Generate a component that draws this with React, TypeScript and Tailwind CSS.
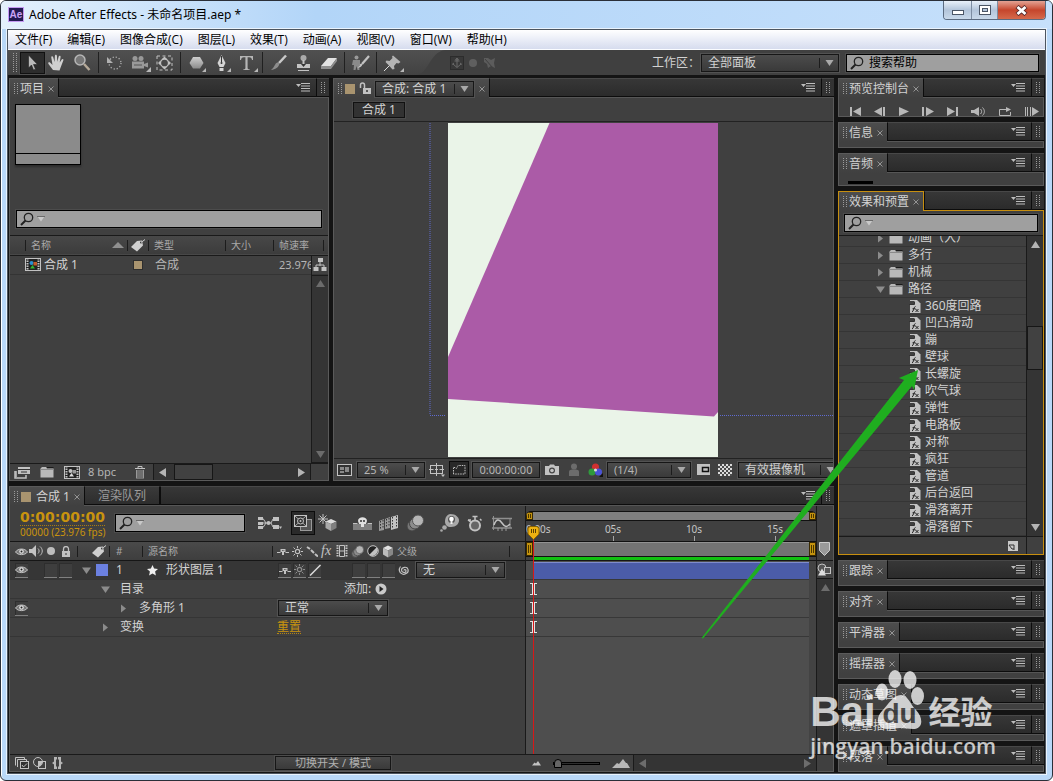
import React from "react";
import type { ReactNode } from "react";

type IconProps = { w: number; h: number; children: ReactNode; className?: string };
const Svg = ({ w, h, children, className = "" }: IconProps) => (
  <svg width={w} height={h} viewBox={`0 0 ${w} ${h}`} className={`shrink-0 ${className}`} aria-hidden="true">
    {children}
  </svg>
);

const G = "#c2c2c2";

/* ---------- small shared marks ---------- */

const Grip = ({ h = 12 }: { h?: number }) => (
  <Svg w={4} h={h}>
    {[0, 3].map((x) =>
      Array.from({ length: Math.floor(h / 2) }, (_, i) => (
        <rect key={`${x}-${i}`} x={x} y={i * 2} width="1" height="1" fill="#9a9a9a" />
      )),
    )}
  </Svg>
);

const Close = () => (
  <button aria-label="关闭" className="flex shrink-0">
    <Svg w={6} h={6}>
      <path d="M.5.5l5 5M5.500.5l-5 5" stroke="#949494" fill="none" />
    </Svg>
  </button>
);

const PanelMenu = () => (
  <button aria-label="面板菜单" className="flex shrink-0">
    <Svg w={14} h={9}>
      <path d="M0 1h5L2.500 4z" fill="#bdbdbd" />
      <path d="M5 .5h9M5 3h9M5 5.500h9M5 8h9" stroke="#bdbdbd" />
    </Svg>
  </button>
);

const Tri = ({ dir, dim = false }: { dir: "up" | "down" | "left" | "right"; dim?: boolean }) => {
  const d = {
    up: "M0 8h9L4.500 1z",
    down: "M0 1h9L4.500 8z",
    left: "M8 0v9L1 4.500z",
    right: "M1 0v9l7-4.500z",
  }[dir];
  return (
    <Svg w={9} h={9}>
      <path d={d} fill={dim ? "#6c6c6c" : "#b4b4b4"} />
    </Svg>
  );
};

const Twirl = ({ open = false }: { open?: boolean }) => (
  <button aria-label="展开" className="flex w-[9px] shrink-0 justify-center">
    <Svg w={9} h={9}>
      <path d={open ? "M0 1.500h9L4.500 8z" : "M2 .5v8l5-4z"} fill="#8c8c8c" />
    </Svg>
  </button>
);

const Sep = ({ className = "h-[11px]" }: { className?: string }) => (
  <span className={`w-px shrink-0 bg-[#1c1c1c] ${className}`} />
);

const Select = ({ label, value, className }: { label: string; value: string; className: string }) => (
  <span
    className={`relative flex shrink-0 border border-[#161616] bg-gradient-to-b from-[#4c4c4c] to-[#3a3a3a] outline outline-[#525252] ${className}`}
  >
    <select aria-label={label} className="w-full appearance-none bg-transparent pl-[6px] leading-[14px] outline-none">
      <option>{value}</option>
    </select>
    <span className="pointer-events-none absolute inset-y-0 right-[4px] flex items-center gap-[5px]">
      <Sep className="h-[10px]" />
      <Svg w={9} h={6}>
        <path d="M.5 0h8L4.500 6z" fill="#a9a9a9" />
      </Svg>
    </span>
  </span>
);

const Lens = () => (
  <Svg w={14} h={14}>
    <circle cx="8.500" cy="5.500" r="4.200" fill="none" stroke="#222" strokeWidth="1.300" />
    <path d="M5.500 8.500L1 13" stroke="#222" strokeWidth="2" />
  </Svg>
);

const Search = ({ label, className, drop = true, placeholder }: { label: string; className: string; drop?: boolean; placeholder?: string }) => (
  <label
    className={`flex h-[18px] items-center gap-[3px] border border-black bg-[#9f9f9f] pl-[3px] outline outline-[#4c4c4c] ${className}`}
  >
    <Lens />
    {drop && (
      <Svg w={8} h={6}>
        <path d="M.5 .5h7L4 5.500z" fill="#c9c9c9" />
        <path d="M0 .5h8" stroke="#6b6b6b" />
      </Svg>
    )}
    <input
      aria-label={label}
      placeholder={placeholder}
      className="w-0 min-w-0 flex-1 bg-transparent pl-[2px] leading-[14px] text-black outline-none placeholder:text-black"
    />
  </label>
);

/* ---------- panel shell ---------- */

type PanelProps = {
  tab: ReactNode;
  extra?: ReactNode;
  active?: boolean;
  className?: string;
  children?: ReactNode;
};
const Panel = ({ tab, extra, active = false, className = "", children }: PanelProps) => (
  <section className={`flex min-w-0 flex-col ${className}`}>
    <header className="flex h-[20px] shrink-0">
      <div
        className={`flex shrink-0 items-center border-t border-l bg-gradient-to-b from-[#4d4d4d] to-[#404040] pr-[4px] pl-[4px] ${
          active ? "border-r border-[#c78f10]" : "border-[#5a5a5a]"
        }`}
      >
        {tab}
      </div>
      <div className={`flex min-w-0 flex-1 border-b ${active ? "border-[#c78f10]" : "border-[#565656]"}`}>
        {extra}
        <div className="flex min-w-0 flex-1 items-center justify-end border-t border-b border-l border-t-[#484848] border-b-[#0c0c0c] border-l-[#0c0c0c] bg-gradient-to-b from-[#373737] to-[#2b2b2b] pr-[6px]">
          <PanelMenu />
        </div>
        <div className="flex w-[13px] items-center justify-center border-t border-b border-l border-t-[#484848] border-b-[#0c0c0c] border-l-[#0c0c0c] bg-[#333333]">
          <Grip />
        </div>
      </div>
    </header>
    <div
      className={`flex min-h-0 flex-1 flex-col border-x border-b bg-[#404040] ${
        active ? "border-[#c78f10]" : "border-[#5a5a5a]"
      }`}
    >
      {children}
    </div>
  </section>
);

const Title = ({ children }: { children: ReactNode }) => (
  <>
    <Grip />
    <h2 className="mr-[4px] ml-[2px] whitespace-nowrap">{children}</h2>
    <Close />
  </>
);

/* ---------- toolbar ---------- */

const Corner = () => <path d="M22 17v4h-4z" fill="#b8b8b8" />;

const tools: { name: string; art: ReactNode }[][] = [
  [
    { name: "选择工具", art: <path d="M8.500 4v13l3-3 2 5 2-.8-2-4.700h4z" fill="#b9b9b9" stroke="#222" strokeWidth=".6" /> },
    {
      name: "手形工具",
      art: (
        <path
          d="M8 19l-4.500-6c-1-1.500.8-2.300 1.800-1.200L7.500 14 6.300 6.500c-.2-1.500 1.500-1.700 1.900-.3L9.600 11l.3-6.200c0-1.500 1.900-1.500 2 0l.4 6 1.400-5.300c.4-1.400 2.100-1 1.900.4l-.9 5.600 2-3c.8-1.200 2.200-.5 1.600.9L15.800 16l-1.300 3.500z"
          fill="#d0d0d0"
        />
      ),
    },
    {
      name: "缩放工具",
      art: (
        <>
          <circle cx="10" cy="9" r="5" fill="#777" stroke="#b5b5b5" strokeWidth="1.500" />
          <path d="M14 13l5.500 6" stroke="#b5a998" strokeWidth="2.500" />
        </>
      ),
    },
  ],
  [
    {
      name: "旋转工具",
      art: (
        <>
          <circle cx="13" cy="12" r="6" fill="none" stroke="#b0b0b0" strokeWidth="1.300" strokeDasharray="1.200 1.940" />
          <path d="M5 6v6h6z" fill="#b0b0b0" />
        </>
      ),
    },
    {
      name: "摄像机工具",
      art: (
        <>
          <circle cx="8" cy="7.500" r="2.500" fill="#999" />
          <circle cx="14" cy="7.500" r="2.500" fill="#999" />
          <path d="M5 10.500h12v7H5zM17 13l4-1.500v5L17 15z" fill="#999" />
          <path d="M7 14h8" stroke="#555" />
          <path d="M24 16v5h-5z" fill="#b8b8b8" />
        </>
      ),
    },
    {
      name: "轴心点工具",
      art: (
        <>
          <rect x="5" y="5" width="15" height="14" fill="none" stroke={G} strokeDasharray="3 2.500" />
          <circle cx="12.500" cy="12" r="4" fill="none" stroke={G} strokeWidth="1.300" />
          <path d="M12.500 5.500l2.500 2.500h-5zM12.500 18.500l2.500-2.500h-5zM6 12l2.500-2.500v5zM19 12l-2.500-2.500v5z" fill={G} />
        </>
      ),
    },
  ],
  [
    {
      name: "形状工具",
      art: (
        <>
          <path d="M9 6h7l3.500 6-3.500 5.500H9L5.500 12z" fill="url(#shade)" />
          <Corner />
        </>
      ),
    },
    {
      name: "钢笔工具",
      art: (
        <>
          <path d="M12.500 4l4 8-2 4h-4l-2-4zM10.500 17h4v3h-4z" fill="#d4d4d4" />
          <path d="M12.500 5v6" stroke="#333" />
          <circle cx="12.500" cy="12" r="1" fill="#333" />
          <Corner />
        </>
      ),
    },
    {
      name: "文字工具",
      art: (
        <>
          <path d="M6 5h13v4h-1c-.3-2-1-2.800-2.800-2.800H13.600V17c0 1 .5 1.300 2 1.300V19H9.400v-.7c1.500 0 2-.3 2-1.300V6.200H9.800C8 6.200 7.300 7 7 9H6z" fill="#b5b5b5" />
          <path d="M24 17v4h-4z" fill="#b8b8b8" />
        </>
      ),
    },
  ],
  [
    {
      name: "画笔工具",
      art: (
        <>
          <path d="M20 4.500L13 12" stroke="#c9c9c9" strokeWidth="2.500" />
          <path d="M13.500 12.500c-1 4-4 6-8.500 6.500 2-1.500 3-3.500 4.500-6 1-1.500 3-2 4-.5z" fill="#8d8d8d" />
        </>
      ),
    },
    {
      name: "图章工具",
      art: (
        <>
          <circle cx="12.500" cy="7" r="3" fill="#aaa" />
          <path d="M11.500 9h2v4h-2zM6 13h13v4H6z" fill="#c4c4c4" />
          <path d="M7 19.500h11" stroke="#c4c4c4" />
          <path d="M10 13h5l-2.500 3z" fill="#333" />
        </>
      ),
    },
    {
      name: "橡皮擦工具",
      art: (
        <>
          <path d="M12 7h9l-6 8H5z" fill="#e2e2e2" />
          <path d="M5 15h10v3H5zM15 15l6-8v3l-6 8z" fill="#8f8f8f" />
        </>
      ),
    },
  ],
  [
    {
      name: "动态笔刷",
      art: (
        <>
          <circle cx="8.500" cy="6.500" r="2" fill="#9a9a9a" />
          <path d="M5 9h7v5h-1l.5 5h-2l-1-4-1 4h-2l.5-5H4z" fill="#8a8a8a" />
          <path d="M21 5l-7 8" stroke={G} strokeWidth="2.200" />
          <path d="M14.500 13.500c-1 2.500-2.500 3-5 3.500 2-1.500 2-4 3.500-4.500z" fill={G} />
        </>
      ),
    },
  ],
  [
    {
      name: "木偶工具",
      art: (
        <>
          <path d="M13 4.500l7.500 6.500-2 1.500-2-.5-2.500 3 .5 3-2 .5-3.500-4-3.500-3.500 1-1.500 3 .5 3-3-.5-1.500z" fill="#b4b4b4" />
          <path d="M9.500 14.500L4 20" stroke="#ddd" />
          <path d="M24 17v4h-4z" fill="#b8b8b8" />
        </>
      ),
    },
  ],
];

const Toolbar = () => (
  <div className="flex h-[25px] shrink-0 items-center bg-[#404040] pr-[6px]">
    <div className="flex h-full items-center bg-gradient-to-b from-[#505050] to-[#424242] pl-[5px]">
      <Grip h={20} />
      <div className="ml-[3px] flex items-center">
        {tools.map((group, gi) => (
          <div key={gi} className="flex items-center">
            {gi > 0 && <span className="mx-[3px] h-[21px] w-px bg-[#202020]" />}
            {group.map((t, i) => (
              <button
                key={t.name}
                aria-label={t.name}
                className={
                  gi === 0 && i === 0
                    ? "flex h-[22px] w-[25px] items-center justify-center border border-[#111] bg-[#2c2c2c] outline outline-[#4e4e4e]"
                    : "flex h-[23px] w-[25px] items-center justify-center"
                }
              >
                <Svg w={25} h={24}>
                  {t.art}
                </Svg>
              </button>
            ))}
          </div>
        ))}
      </div>
    </div>
    <Svg w={40} h={25}>
      <defs>
        <linearGradient id="bar" x1="0" y1="0" x2="0" y2="1">
          <stop offset="0" stopColor="#505050" />
          <stop offset="1" stopColor="#424242" />
        </linearGradient>
        <linearGradient id="shade" x1="0" y1="0" x2="0" y2="1">
          <stop offset="0" stopColor="#cfcfcf" />
          <stop offset="1" stopColor="#8b8b8b" />
        </linearGradient>
      </defs>
      <path d="M0 0h40c-16 2-16 25-30 25H0z" fill="url(#bar)" />
    </Svg>
    <Svg w={52} h={16} className="ml-[4px]">
      <rect x="1.500" y="1.500" width="13" height="13" fill="#383838" stroke="#2c2c2c" />
      <path d="M8 4v8M4 9l4 3.500L12 9M5.500 6h5M8 3l1.500 2h-3zM3 9.500l2-1.500M13 9.500L11 8" stroke="#6a6a6a" fill="none" />
      <circle cx="24" cy="8" r="4" fill="#5f5f5f" />
      <path d="M35 3h4l3 2 4-2-1 5 1 5-4-2-3 2-1-4-3-2z" fill="#5c5c5c" />
      <path d="M36 4l8 9" stroke="#404040" />
    </Svg>
    <div className="flex flex-1 items-center justify-end">
      <span className="mr-px leading-[14px]">工作区：</span>
      <Select label="工作区" value="全部面板" className="h-[18px] w-[138px]" />
      <Search label="搜索帮助" placeholder="搜索帮助" drop={false} className="ml-[7px] w-[193px]" />
    </div>
  </div>
);

/* ---------- project panel ---------- */

const FilmIcon = ({ color = false }: { color?: boolean }) => (
  <Svg w={16} h={13}>
    <rect x=".5" y=".5" width="15" height="12" fill="#222" stroke={G} />
    <path d="M2.500 0v13M13.500 0v13" stroke={G} strokeWidth="2" strokeDasharray="1.500 1" />
    <circle cx="6.500" cy="5" r="2" fill={color ? "#2b8fd0" : G} />
    <rect x="8.500" y="4" width="3.500" height="3.500" fill={color ? "#c25a2a" : "#999"} />
    <path d="M5 10.500l2.500-3.500 2.500 3.500z" fill={color ? "#33b533" : "#ddd"} />
  </Svg>
);

const Folder = () => (
  <Svg w={14} h={12}>
    <path d="M.5 2.500L2 1h4l1 1.500h6.500v9H.5z" fill="#b9b9b9" />
    <path d="M.5 3.500h13" stroke="#8a8a8a" />
    <path d="M7 1.500h6.500" stroke="#1a1a1a" />
  </Svg>
);

const Tag = () => (
  <Svg w={16} h={13}>
    <path d="M1 8l6-6 5-.5 1 5-6 6z" fill="#cfcfcf" />
    <circle cx="11" cy="3.500" r="1" fill="#333" />
    <path d="M11 3.500L15 .5" stroke="#cfcfcf" />
  </Svg>
);

const Flow = () => (
  <Svg w={14} h={13}>
    <path d="M7 4v4M3 9V7h8v2" stroke={G} fill="none" />
    <path d="M5 0h5v4H5zM.5 9h5v4h-5zM8.500 9h5v4h-5z" fill={G} />
  </Svg>
);

const ProjectPanel = () => (
  <Panel tab={<Title>项目</Title>} className="w-[320px] shrink-0">
    <div className="pt-[6px] pr-[6px] pl-[5px]">
      <div className="flex h-[61px] w-[66px] flex-col border border-black bg-[#8b8b8b] shadow-[0_2px_2px_#2c2c2c]">
        <div className="flex-1" />
        <div className="h-[11px] border-t border-black" />
      </div>
      <Search label="搜索项目" className="mt-[45px] ml-[1px]" />
    </div>
    <div className="mt-[7px] flex min-h-0 flex-1 flex-col border-t border-[#1a1a1a]">
      <table className="w-full table-fixed border-collapse text-left">
        <colgroup>
          <col className="w-[15px]" />
          <col className="w-[102px]" />
          <col className="w-[21px]" />
          <col className="w-[77px]" />
          <col className="w-[48px]" />
          <col />
          <col className="w-[17px]" />
        </colgroup>
        <thead>
          <tr className="h-[19px] border-b border-[#1a1a1a] bg-gradient-to-b from-[#484848] to-[#3c3c3c] text-[10px] leading-[14px] text-[#a9a9a9]">
            <th aria-label="状态" />
            <th className="p-0 font-normal">
              <div className="flex items-center">
                <Sep />
                <span className="ml-[5px] flex-1">名称</span>
                <Svg w={12} h={6} className="mr-[3px]">
                  <path d="M0 6h12L6 0z" fill="#8f8f8f" />
                </Svg>
              </div>
            </th>
            <th aria-label="标签" className="p-0">
              <div className="flex items-center gap-[2px]">
                <Sep />
                <Tag />
              </div>
            </th>
            <th className="p-0 font-normal">
              <div className="flex items-center">
                <Sep />
                <span className="ml-[5px]">类型</span>
              </div>
            </th>
            <th className="p-0 font-normal">
              <div className="flex items-center">
                <Sep />
                <span className="ml-[5px]">大小</span>
              </div>
            </th>
            <th colSpan={2} className="p-0 font-normal">
              <div className="flex items-center">
                <Sep />
                <span className="ml-[5px] flex-1">帧速率</span>
                <Sep className="mr-[4px] h-[11px]" />
              </div>
            </th>
          </tr>
        </thead>
        <tbody>
          <tr className="h-[19px] border-b border-[#343434] leading-[14px]">
            <td />
            <td className="p-0">
              <div className="flex items-center gap-[3px]">
                <FilmIcon color />
                <span>合成 1</span>
              </div>
            </td>
            <td className="p-0">
              <div className="ml-[6px] h-[10px] w-[10px] border border-[#2e2e2e] bg-[#a9946f]" />
            </td>
            <td className="p-0 pl-[7px] text-[#b5b5b5]">合成</td>
            <td />
            <td className="overflow-hidden p-0 pl-[6px] whitespace-nowrap text-[#b5b5b5]">
              <div className="overflow-hidden text-[11px]">23.976</div>
            </td>
            <td className="border-l border-[#1a1a1a] p-0 pl-[1px]">
              <button aria-label="流程图" className="flex">
                <Flow />
              </button>
            </td>
          </tr>
        </tbody>
      </table>
      <div className="flex min-h-0 flex-1">
        <div className="flex-1" />
        <div className="flex w-[17px] flex-col items-center justify-between border-y border-l border-[#1a1a1a] bg-[#343434] py-[3px]">
          <Tri dir="up" dim />
          <Tri dir="down" dim />
        </div>
      </div>
    </div>
    <footer className="flex h-[17px] shrink-0 items-center border-t border-[#1a1a1a] pl-[4px]">
      <Svg w={17} h={13}>
        <path d="M4 1h12v7H4z" fill={G} />
        <path d="M4 3.500h12M7 6h6" stroke="#333" />
        <path d="M1 5v7h11V9M1 6h2M1 8h2M1 10h2" stroke={G} fill="none" strokeWidth="1.500" />
      </Svg>
      <span className="ml-[9px] flex">
        <Folder />
      </span>
      <span className="ml-[10px] flex">
        <FilmIcon />
      </span>
      <span className="ml-[8px] text-[11px] leading-[14px] text-[#b5b5b5]">8 bpc</span>
      <button aria-label="删除" className="ml-[18px] flex">
        <Svg w={12} h={14}>
          <path d="M1 3.500h10M4 3V1.500h4V3" stroke={G} fill="none" />
          <path d="M2 5h8v8.500H2z" fill="#999" />
          <path d="M4 5v8M6 5v8M8 5v8" stroke="#444" />
        </Svg>
      </button>
      <div className="ml-[7px] flex h-full w-[158px] items-center border-x border-[#1a1a1a] bg-[#343434] pl-[4px]">
        <Tri dir="left" />
        <div className="ml-[7px] h-[16px] w-[39px] border border-[#161616] bg-[#414141]" />
        <div className="flex-1" />
        <span className="mr-[4px] flex">
          <Tri dir="right" />
        </span>
      </div>
    </footer>
  </Panel>
);

/* ---------- composition panel ---------- */

const CompPanel = () => (
  <Panel
    className="flex-1"
    tab={
      <>
        <Grip />
        <span className="ml-[3px] h-[10px] w-[10px] bg-[#a9946f]" />
        <Svg w={13} h={13} className="ml-[4px]">
          <path d="M1.500 6V3a2 2 0 014 0v3" stroke={G} fill="none" strokeWidth="1.500" />
          <path d="M4 6h8v6H4z" fill={G} />
          <path d="M8 8v2" stroke="#333" strokeWidth="1.500" />
        </Svg>
        <Select label="合成" value="合成: 合成 1" className="mr-[5px] ml-[3px] h-[16px] w-[99px]" />
        <Close />
      </>
    }
  >
    <div className="flex h-[24px] items-center border-b border-[#222] pl-[19px]">
      <button className="h-[16px] border border-[#111] bg-[#323232] px-[8px] leading-[14px] outline outline-[#4b4b4b]">
        合成 1
      </button>
    </div>
    <div className="flex min-h-0 flex-1 overflow-hidden">
      <svg viewBox="334 123 499 334" className="h-full w-full" role="img" aria-label="合成视图">
        <path d="M448 123h270v334H448z" fill="#eaf4e8" />
        <path d="M549.500 123H718v289l-4 4.500L448 399v-42z" fill="#ab5ba7" />
        <path d="M430 123v292" stroke="#5f6bd0" strokeDasharray="1 1" fill="none" />
        <path d="M430 415.500H446M720 415.500h113" stroke="#5f6bd0" strokeDasharray="1 1" fill="none" />
      </svg>
    </div>
    <footer className="flex h-[22px] shrink-0 items-center overflow-hidden border-t border-[#222] pl-[3px] text-[#b5b5b5]">
      <Svg w={15} h={12}>
        <rect x=".5" y=".5" width="14" height="11" fill="#333" stroke={G} />
        <path d="M3 3h4v3H3zM8 3h4v5H8zM3 7h4v2H3z" fill="#8a8a8a" />
      </Svg>
      <Select label="缩放" value="25 %" className="ml-[5px] h-[16px] w-[68px] text-[11px]" />
      <Svg w={16} h={14} className="ml-[4px]">
        <rect x="1.500" y="2.500" width="12" height="8" fill="none" stroke={G} />
        <path d="M7.500 0v5M7.500 8v5M0 6.500h4.500M10.500 6.500H15M6 6.500h3M7.500 5v3" stroke={G} />
        <path d="M12 11.500h4L14 14z" fill={G} />
      </Svg>
      <button
        aria-label="遮罩显示"
        className="ml-[4px] flex h-[17px] w-[20px] shrink-0 items-center justify-center border border-[#0c0c0c] bg-[#282828]"
      >
        <Svg w={14} h={11}>
          <path d="M1.500 10V3l3 1.500L6 1.500h7V10z" fill="none" stroke={G} strokeDasharray="1.500 1" />
        </Svg>
      </button>
      <button className="ml-[3px] h-[16px] w-[68px] shrink-0 border border-[#161616] bg-gradient-to-b from-[#4a4a4a] to-[#3a3a3a] text-center text-[11px] leading-[14px] outline outline-[#525252]">
        0:00:00:00
      </button>
      <Svg w={14} h={11} className="ml-[5px]">
        <path d="M0 2h4l1-1.500h4L10 2h4v9H0z" fill={G} />
        <circle cx="7" cy="6.500" r="3" fill="#444" />
        <circle cx="7" cy="6.500" r="1.800" fill={G} />
      </Svg>
      <Svg w={12} h={13} className="ml-[9px]">
        <circle cx="6" cy="3.500" r="3" fill="#6c6c6c" />
        <path d="M1 13V8.500C1 7 3 6.500 6 6.500s5 .5 5 2V13z" fill="#6c6c6c" />
      </Svg>
      <Svg w={16} h={14} className="ml-[8px]">
        <circle cx="7.500" cy="4" r="3.500" fill="#d03030" />
        <circle cx="4" cy="9" r="3.500" fill="#2f9a3c" />
        <circle cx="10.500" cy="9" r="3.500" fill="#4a52d8" />
        <circle cx="7.500" cy="7" r="1.500" fill="#ddd" />
        <path d="M15 10v4h-4z" fill="#111" />
      </Svg>
      <Select label="分辨率" value="(1/4)" className="ml-[3px] h-[16px] w-[84px] text-[11px]" />
      <Svg w={13} h={11} className="ml-[6px]">
        <rect width="13" height="11" fill={G} />
        <rect x="5.500" y="3.500" width="6" height="4" fill={G} stroke="#111" strokeWidth="1.500" />
      </Svg>
      <Svg w={14} h={12} className="ml-[8px]">
        <rect width="14" height="12" fill="#dadada" />
        {Array.from({ length: 6 }, (_, r) =>
          Array.from({ length: 7 }, (_, c) =>
            (r + c) % 2 ? <rect key={`${r}-${c}`} x={c * 2} y={r * 2} width="2" height="2" fill="#4a4a4a" /> : null,
          ),
        )}
      </Svg>
      <Select label="视图" value="有效摄像机" className="ml-[6px] h-[16px] w-[102px] text-[#d0d0d0]" />
    </footer>
  </Panel>
);

/* ---------- timeline panel ---------- */

const Eye = () => (
  <Svg w={13} h={9}>
    <path d="M.5 5C3 1 10 1 12.500 5 10 8.500 3 8.500.5 5z" fill="#777" stroke={G} />
    <circle cx="6.500" cy="4.500" r="2.300" fill="#ddd" />
    <circle cx="6.500" cy="4.500" r="1" fill="#222" />
  </Svg>
);
const Shy = () => (
  <Svg w={12} h={10}>
    <path d="M0 6.500h3.500M8.500 6.500H12" stroke={G} />
    <path d="M3.500 3h5v3h-1.500v3h-2V6H3.500z" fill={G} />
    <path d="M5 4.500h.6M6.600 4.500h.6" stroke="#222" />
  </Svg>
);
const Sun = ({ dim = false }: { dim?: boolean }) => (
  <Svg w={11} h={11}>
    <circle cx="5.500" cy="5.500" r="2.200" fill="none" stroke={dim ? "#8d8d8d" : G} strokeWidth="1.200" />
    <path
      d="M5.500 0v2M5.500 9v2M0 5.500h2M9 5.500h2M1.500 1.500l1.500 1.500M8 8l1.500 1.500M9.500 1.500L8 3M3 8L1.500 9.500"
      stroke={dim ? "#8d8d8d" : G}
    />
  </Svg>
);
const Cell = ({ label, children }: { label: string; children?: ReactNode }) => (
  <button
    aria-label={label}
    className="flex h-[15px] w-[13px] shrink-0 items-center justify-center border-b border-[#808080] bg-[#3e3e3e] shadow-[inset_1px_1px_#2e2e2e]"
  >
    {children}
  </button>
);
const Blur = ({ big = false }: { big?: boolean }) => (
  <svg width={big ? 18 : 13} height={big ? 18 : 13} viewBox="0 0 18 18" className="shrink-0" aria-hidden="true">
    <circle cx="6" cy="12" r="5" fill="#777" stroke="#444" />
    <circle cx="9" cy="9.500" r="5.500" fill="#8c8c8c" stroke="#444" />
    <circle cx="12" cy="6.500" r="5.500" fill="#b5b5b5" stroke="#555" />
  </svg>
);
const Cube = () => (
  <Svg w={12} h={13}>
    <path d="M6 .5l5 2.500-5 2.500L1 3z" fill="#e0e0e0" />
    <path d="M1 3l5 2.500v7L1 9.500z" fill="#bbb" />
    <path d="M11 3L6 5.500v7l5-3z" fill="#888" />
  </Svg>
);

const layerGrid = "grid grid-cols-[67px_32px_33px_130px_1fr] items-center";

const TimelineControls = () => (
  <div className="flex h-[36px] shrink-0 items-start border-b border-[#161616] pl-[10px]">
    <div className="w-[84px] pt-[4px] text-[#c8930e]">
      <button className="block border-b border-dotted border-[#a87c12] font-[family-name:'DejaVu_Sans'] text-[14px] leading-[15px] font-bold">
        0:00:00:00
      </button>
      <div className="text-[10px] leading-[13px] whitespace-nowrap">00000 (23.976 fps)</div>
    </div>
    <Search label="搜索图层" className="mt-[8px] ml-[11px] w-[130px]" />
    <div className="mt-[5px] flex h-[24px] items-center">
      <Svg w={25} h={14} className="ml-[12px]">
        <path d="M1 1h5v3H1zM1 6h5v3H1zM1 10h5v3H1zM16 1h6v4h-6zM16 9h6v4h-6z" fill={G} />
        <path d="M6 2.500l3 4.500-3 4.500M6 7h8M16 3l-2 4 2 4" stroke={G} fill="none" />
        <circle cx="11.500" cy="7" r="2" fill={G} />
        <path d="M22 10.500h3L23.500 13z" fill={G} />
      </Svg>
      <button aria-label="实时更新" className="ml-[9px] flex h-[24px] w-[24px] items-center justify-center border border-[#0c0c0c] bg-[#2a2a2a]">
        <Svg w={18} h={18}>
          <rect x="6.500" y="5.500" width="11" height="11" fill="#555" stroke="#999" />
          <rect x=".5" y="1.500" width="12" height="11" fill="#333" stroke={G} />
          <path d="M1 2l11 10M12 2L1 12" stroke={G} strokeWidth=".8" />
          <circle cx="6.500" cy="7" r="3" fill="#333" stroke={G} />
          <circle cx="6.500" cy="7" r="1" fill={G} />
        </Svg>
      </button>
      <Svg w={20} h={18} className="ml-[3px]">
        <path d="M5 0v10M0 5h10M1.500 1.500l7 7M8.500 1.500l-7 7" stroke={G} />
        <path d="M13 5l5.500 2.500L13 10 7.500 7.500z" fill="#ddd" />
        <path d="M7.500 7.500L13 10v7l-5.500-3z" fill="#aaa" />
        <path d="M18.500 7.500L13 10v7l5.500-3z" fill="#808080" />
      </Svg>
      <Svg w={19} h={14} className="ml-[15px]">
        <path d="M0 8h19v6H0z" fill="#7f7f7f" />
        <path d="M0 7.500h4.500M14.500 7.500H19" stroke={G} />
        <path d="M5 5c0-5 9-5 9 0l-1 3h-2v3H8V8H6z" fill="#e0e0e0" />
        <circle cx="8" cy="5" r="1" fill="#333" />
        <circle cx="11" cy="5" r="1" fill="#333" />
      </Svg>
      <Svg w={19} h={17} className="ml-[7px]">
        <path d="M0 6l5-2v11l-5 1zM6 4l5-2v11l-5 1z" fill="#999" />
        <path d="M12 2l7-2v13l-7 2z" fill={G} />
        <path d="M1.500 6v9M4 5v9M7.500 4v9M10 3v9M13.500 2v12M17.500 1v12" stroke="#333" strokeDasharray="1.500 1.500" />
      </Svg>
      <span className="ml-[8px] flex">
        <Blur big />
      </span>
      <Svg w={19} h={18} className="ml-[16px]">
        <path d="M10.500 0C16 0 19 3.500 19 6.500S16 13 11 13c-4 0-6-2-6-5.500S7 0 10.500 0z" fill="#a9a9a9" />
        <circle cx="11.500" cy="5.500" r="3.500" fill="#555" />
        <circle cx="11.500" cy="5" r="2.300" fill="#fff" />
        <path d="M10.500 7h2v3h-2z" fill="#eee" />
        <circle cx="4.500" cy="13.500" r="2.300" fill="#a9a9a9" />
        <circle cx="1.500" cy="16.500" r="1.300" fill="#a9a9a9" />
      </Svg>
      <Svg w={15} h={17} className="ml-[8px]">
        <circle cx="8" cy="10.500" r="5" fill="#666" stroke={G} strokeWidth="2" />
        <path d="M8 1v4M5.500 1.500h5M1 5l4 3M1 5h3M13 4l1.500 1.500" stroke={G} strokeWidth="1.500" />
      </Svg>
      <Svg w={20} h={15} className="ml-[10px]">
        <path d="M0 2.500h20M0 12h20" stroke="#8f8f8f" strokeWidth="1.500" />
        <path d="M1.500 0v14M18 2v10" stroke="#8f8f8f" />
        <path d="M2 9c2-6 5-6.500 8-2s5 4.500 8 1" stroke={G} fill="none" strokeWidth="1.500" />
        <path d="M6 12v3M10 12v3M14 12v3" stroke="#999" />
      </Svg>
    </div>
  </div>
);

const LayerHeader = () => (
  <div className={`${layerGrid} h-[19px] shrink-0 border-b border-[#161616] bg-gradient-to-b from-[#4a4a4a] to-[#3e3e3e] text-[10px] leading-[14px] text-[#a9a9a9]`}>
    <div className="flex items-center pl-[5px]">
      <Eye />
      <Svg w={14} h={12} className="ml-px">
        <path d="M0 4h3l4-4v12L3 8H0z" fill={G} />
        <path d="M9 3.500c1.500 1.500 1.500 3.500 0 5M11 1.500c3 2.500 3 6.500 0 9" stroke={G} fill="none" />
      </Svg>
      <span className="ml-[4px] h-[8px] w-[8px] rounded-full bg-[#bdbdbd]" />
      <Svg w={8} h={11} className="ml-[7px]">
        <path d="M1.500 5V3a2.500 2.500 0 015 0v2" stroke={G} fill="none" strokeWidth="1.300" />
        <path d="M0 5h8v6H0z" fill={G} />
        <path d="M4 7v2" stroke="#333" />
      </Svg>
    </div>
    <div className="flex items-center">
      <Sep />
      <span className="ml-[13px] flex">
        <Tag />
      </span>
    </div>
    <div className="flex items-center">
      <Sep />
      <span className="ml-[6px]">#</span>
    </div>
    <div className="flex items-center">
      <Sep />
      <span className="ml-[5px]">源名称</span>
    </div>
    <div className="flex items-center">
      <Sep />
      <span className="ml-[4px] flex items-center gap-[3px]">
        <Shy />
        <Sun />
        <Svg w={12} h={11}>
          <path d="M1 1l3 2M5 4l3 3M9 8l3 2.500" stroke={G} fill="none" strokeWidth="2" />
        </Svg>
        <i className="w-[12px] font-[family-name:'Liberation_Serif'] text-[14px] text-[#c2c2c2]">fx</i>
        <Svg w={12} h={12}>
          <path d="M1.500 0v12M10.500 0v12" stroke={G} strokeWidth="2" strokeDasharray="1.500 1" />
          <path d="M3.500 .5h5v11h-5zM3.500 6h5" stroke={G} fill="none" />
        </Svg>
        <Blur />
        <Svg w={12} h={12}>
          <circle cx="6" cy="6" r="5.300" fill="#222" stroke={G} />
          <path d="M9.700 2.300A5.300 5.300 0 012.300 9.700z" fill={G} />
        </Svg>
        <Cube />
      </span>
      <span className="ml-[3px] flex-1">父级</span>
      <Sep className="mr-[15px] h-[11px]" />
    </div>
  </div>
);

const rowLine = "h-[19px] shrink-0 border-b border-[#353535] leading-[14px]";

const Layers = () => (
  <div className="flex flex-1 flex-col">
    <div className={`${layerGrid} ${rowLine} bg-[#363636]`}>
      <div className="flex items-center gap-[2px] pl-[5px]">
        <Cell label="显示">
          <Eye />
        </Cell>
        <span className="w-[12px]" />
        <Cell label="独奏" />
        <Cell label="锁定" />
      </div>
      <div className="flex items-center gap-[5px] pl-[5px]">
        <Twirl open />
        <span className="h-[12px] w-[12px] bg-[#6b80e0]" />
      </div>
      <span className="pl-[7px]">1</span>
      <div className="flex items-center gap-[8px] pl-[5px]">
        <Svg w={11} h={11}>
          <path d="M5.500 0l1.600 3.600 3.900.4-2.900 2.600.8 3.900-3.400-2-3.400 2 .8-3.900L0 4l3.900-.4z" fill="#eee" />
        </Svg>
        <span>形状图层 1</span>
      </div>
      <div className="flex items-center pl-[6px]">
        <div className="flex gap-[2px]">
          <Cell label="退缩">
            <Shy />
          </Cell>
          <Cell label="卷展变换">
            <Sun dim />
          </Cell>
          <Cell label="品质">
            <Svg w={12} h={12}>
              <path d="M1 11.500L11.500 1" stroke="#ddd" strokeWidth="1.500" />
            </Svg>
          </Cell>
        </div>
        <div className="ml-[31px] flex gap-[2px]">
          <Cell label="运动模糊" />
          <Cell label="调节图层" />
          <Cell label="三维图层" />
        </div>
        <Svg w={13} h={12} className="ml-[3px]">
          <path d="M6 6.500c0-1.500 2.300-1 2 .6-.5 2.200-4.500 1.700-4.500-1C3.500 3 9 2 10 5.300c1 3.500-3 5.700-5.700 4.700C1 9 .5 5 2.500 2.500" stroke={G} fill="none" strokeWidth="1.200" />
        </Svg>
        <Select label="父级" value="无" className="ml-[5px] h-[16px] w-[89px]" />
      </div>
    </div>
    <div className={`${rowLine} flex items-center pl-[91px]`}>
      <Twirl open />
      <span className="ml-[10px] w-[224px]">目录</span>
      <span>添加:</span>
      <button aria-label="添加" className="ml-[4px] flex">
        <Svg w={12} h={12}>
          <circle cx="6" cy="6" r="5.500" fill="#c9c9c9" />
          <path d="M4.500 3v6l4-3z" fill="#222" />
        </Svg>
      </button>
    </div>
    <div className={`${rowLine} flex items-center pl-[5px]`}>
      <Cell label="显示">
        <Eye />
      </Cell>
      <span className="ml-[91px] flex">
        <Twirl />
      </span>
      <span className="ml-[11px] w-[139px]">多角形 1</span>
      <Select label="模式" value="正常" className="h-[16px] w-[110px]" />
    </div>
    <div className={`${rowLine} flex items-center pl-[91px]`}>
      <Twirl />
      <span className="ml-[10px] w-[157px]">变换</span>
      <button className="border-b border-dotted border-[#b5850f] leading-[13px] text-[#c8930e]">重置</button>
    </div>
  </div>
);

const Handle = () => (
  <span className="flex w-[7px] shrink-0 items-center justify-center gap-px border border-[#3a2a00] bg-[#c4930f]">
    <i className="h-[60%] w-px bg-[#4a3600]" />
    <i className="h-[60%] w-px bg-[#4a3600]" />
  </span>
);

const trackRow = "flex h-[19px] shrink-0 items-center border-b border-[#383838]";

const TimeTracks = () => (
  <div className="relative flex w-[292px] shrink-0 flex-col border-x border-[#1a1a1a] bg-[#404040]">
    <div className="mt-[5px] flex h-[10px] overflow-hidden rounded-t-[5px] border-y border-[#111]">
      <Handle />
      <span className="flex-1 bg-[#7f7f7f]" />
      <Handle />
    </div>
    <div className="relative h-[20px] overflow-hidden text-[10px] leading-[14px] text-[#c5c5c5]">
      <span className="absolute top-px left-0">0:00s</span>
      {[
        { t: "05s", x: 87 },
        { t: "10s", x: 168 },
        { t: "15s", x: 249 },
      ].map((m) => (
        <span key={m.t} style={{ left: m.x - 15 }} className="absolute top-px flex h-[19px] w-[30px] flex-col items-center justify-between">
          {m.t}
          <i className="h-[5px] w-px bg-[#a5a5a5]" />
        </span>
      ))}
    </div>
    <div className="flex h-[16px] border-y border-[#111]">
      <Handle />
      <span className="flex-1 border-t border-[#929292] bg-[#737373]" />
      <Handle />
    </div>
    <div className="h-[4px] border-b border-[#161616] bg-[#404040] px-[7px]">
      <div className="h-[3px] bg-[#12c112]" />
    </div>
    <div className="flex flex-1 flex-col bg-[#4e4e4e] pr-[7px] shadow-[inset_-7px_0_#434343]">
      <div className={`${trackRow} pl-[7px]`}>
        <span className="h-[17px] flex-1 border-t border-[#7f8ccc] bg-[#4b5ca8]" />
      </div>
      {[0, 1, 2].map((i) => (
        <div key={i} className={`${trackRow} pl-[4px]`}>
          <Svg w={7} h={12}>
            <path d="M0 .5h7M0 11.500h7M2.500 0v12M4.500 0v12" stroke="#e2e2e2" />
          </Svg>
        </div>
      ))}
    </div>
    <span className="absolute top-[20px] bottom-0 left-[7px] w-px bg-[#d81818]" />
    <span className="absolute top-[20px] left-[1px]">
      <Svg w={13} h={14}>
        <path d="M1 2l2-1.500h7L12 2v6l-5.500 5.500L1 8z" fill="#eeb211" stroke="#8a6200" />
        <path d="M4.500 3v4M6.500 3v4M8.500 3v4" stroke="#5a4000" />
      </Svg>
    </span>
  </div>
);

const Timeline = () => (
  <Panel
    className="min-h-0 flex-1"
    tab={
      <>
        <Grip />
        <span className="ml-[3px] h-[10px] w-[10px] bg-[#a9946f]" />
        <h2 className="mr-[4px] ml-[5px] whitespace-nowrap">合成 1</h2>
        <Close />
      </>
    }
    extra={
      <button className="w-[76px] border border-[#0c0c0c] border-t-[#484848] bg-gradient-to-b from-[#3a3a3a] to-[#2d2d2d] leading-[14px] whitespace-nowrap text-[#9c9c9c]">
        渲染队列
      </button>
    }
  >
    <div className="flex min-h-0 flex-1">
      <div className="flex min-w-0 flex-1 flex-col">
        <TimelineControls />
        <LayerHeader />
        <Layers />
      </div>
      <TimeTracks />
      <div className="flex w-[16px] shrink-0 flex-col bg-[#404040]">
        <div className="flex h-[55px] items-end border-b border-[#161616] pb-[4px] pl-[2px]">
          <Svg w={11} h={14}>
            <path d="M.5.5h10v8l-5 5-5-5z" fill="#999" stroke="#ccc" />
          </Svg>
        </div>
        <div className="flex h-[18px] items-center border-b border-[#161616]">
          <Svg w={14} h={13}>
            <circle cx="5" cy="5" r="4" fill="#555" stroke={G} />
            <rect x="7.500" y="4.500" width="6" height="6" fill="#555" stroke={G} />
            <path d="M1 12.500l4-7 4 7z" fill="#ddd" />
          </Svg>
        </div>
        <div className="flex flex-1 flex-col items-center justify-between bg-[#343434] py-[4px]">
          <Tri dir="up" dim />
          <Tri dir="down" dim />
        </div>
      </div>
    </div>
    <footer className="flex h-[17px] shrink-0 items-center border-t border-[#1a1a1a] pl-[5px]">
      <Svg w={14} h={12}>
        <path d="M.5 8.500v-8h9v2M2.500 10V2.500h9v2" stroke={G} fill="none" />
        <rect x="5.500" y="4.500" width="8" height="7" fill="#333" stroke={G} />
        <path d="M7 8l1.500 2L12 6.500" stroke={G} fill="none" />
      </Svg>
      <Svg w={14} h={12} className="ml-[4px]">
        <circle cx="5" cy="5" r="4.500" fill="none" stroke={G} />
        <rect x="5.500" y="4.500" width="7" height="7" fill="none" stroke={G} />
        <path d="M5 4.500h4.500c0 2-1.500 4-4 5z" fill={G} />
      </Svg>
      <Svg w={11} h={12} className="ml-[5px]">
        <path d="M5 0H2v4.500L0 6l2 1.500V12h3V9.500H4v-7h1zM6 0h3v4.500L11 6 9 7.500V12H6V9.500h1v-7H6z" fill="#b5b5b5" />
      </Svg>
      <button className="ml-[212px] h-[14px] w-[116px] border border-[#161616] bg-gradient-to-b from-[#4a4a4a] to-[#3a3a3a] text-[11px] leading-[12px] text-[#b0b0b0] outline outline-[#4c4c4c]">
        切换开关 / 模式
      </button>
      <div className="flex flex-1 items-center justify-end">
        <Svg w={9} h={6}>
          <path d="M0 5.500l2.500-3 1.500 1L6 1l3 4.500z" fill={G} />
        </Svg>
        <input
          type="range"
          aria-label="时间缩放"
          defaultValue={0}
          className="mr-[12px] ml-[12px] h-[3px] w-[47px] appearance-none border border-black bg-[#2e2e2e] [&::-webkit-slider-thumb]:h-[9px] [&::-webkit-slider-thumb]:w-[8px] [&::-webkit-slider-thumb]:appearance-none [&::-webkit-slider-thumb]:rounded-t-[4px] [&::-webkit-slider-thumb]:border [&::-webkit-slider-thumb]:border-black [&::-webkit-slider-thumb]:bg-[#666]"
        />
        <Svg w={18} h={9}>
          <path d="M0 9l5-5 2 1 4-5 3 4 1 0 3 5z" fill="#b8b8b8" />
        </Svg>
      </div>
      <div className="ml-[3px] flex h-full w-[184px] items-center justify-between border-x border-[#1a1a1a] bg-[#343434] px-[4px]">
        <Tri dir="left" dim />
        <Tri dir="right" dim />
      </div>
      <div className="w-[16px]" />
    </footer>
  </Panel>
);

/* ---------- right column ---------- */

const transport: { name: string; w: number; d: string; line?: string }[] = [
  { name: "首帧", w: 11, d: "M0 0h2v9H0zM11 0v9L3 4.500z" },
  { name: "上一帧", w: 12, d: "M8 0v9L0 4.500zM9 0h2v9H9z" },
  { name: "播放", w: 10, d: "M0 0v9l10-4.500z" },
  { name: "下一帧", w: 12, d: "M0 0h2v9H0zM4 0v9l8-4.500z" },
  { name: "末帧", w: 11, d: "M0 0v9l8-4.500zM9 0h2v9H9z" },
  { name: "音频开关", w: 14, d: "M0 3h3l5-3v9L3 6H0z", line: "M9.500 2c1.500 1.500 1.500 3.500 0 5M11.500 .5c2.500 2.500 2.500 5.500 0 8" },
  { name: "循环", w: 14, d: "M8 0l5 2.500L8 5z", line: "M9 2.500H1.500v6h11V5" },
  { name: "内存预演", w: 14, d: "M7 0v9l7-4.500z", line: "M.5 0v9M2.500 0v9M5.500 0v9" },
];

const effects = ["360度回路", "凹凸滑动", "蹦", "壁球", "长螺旋", "吹气球", "弹性", "电路板", "对称", "疯狂", "管道", "后台返回", "滑落离开", "滑落留下"];
const folders = [
  { name: "动画（入）", open: false },
  { name: "多行", open: false },
  { name: "机械", open: false },
  { name: "路径", open: true },
];

const FxFile = () => (
  <Svg w={12} h={13}>
    <path d="M1 0h7l3.500 3.500V13H1z" fill={G} />
    <path d="M0 1h5v3H0z" fill="#404040" />
    <path d="M0 4.500h5.500V1.500" stroke="#333" fill="none" />
    <path d="M3 12c1.700 0 1.500-5.500 3.500-5.500M3.500 8.800h3M6.500 9l3 3M9.500 9l-3 3" stroke="#222" fill="none" />
  </Svg>
);

const EffectsPanel = () => (
  <Panel active tab={<Title>效果和预置</Title>} className="min-h-0 flex-1">
    <Search label="搜索效果" className="mx-[5px] mt-[3px] shrink-0" />
    <div className="mt-[3px] flex min-h-0 flex-1 border-t border-[#1a1a1a]">
      <ul className="flex min-w-0 flex-1 flex-col justify-end overflow-hidden">
        {folders.map((f) => (
          <li key={f.name} className="flex h-[17px] shrink-0 items-center border-b border-[#353535] pl-[37px]">
            <Twirl open={f.open} />
            <span className="ml-[4px] flex">
              <Folder />
            </span>
            <span className="ml-[5px] leading-[16px]">{f.name}</span>
          </li>
        ))}
        {effects.map((e) => (
          <li key={e} className="flex h-[17px] shrink-0 items-center border-b border-[#353535] pl-[70px]">
            <FxFile />
            <span className="ml-[4px] leading-[16px]">{e}</span>
          </li>
        ))}
      </ul>
      <div className="flex w-[17px] flex-col items-center border-l border-[#1a1a1a] bg-[#343434] pt-[4px] pb-[4px]">
        <Tri dir="up" />
        <div className="mt-[77px] h-[44px] w-full border border-[#161616] bg-[#414141]" />
        <div className="flex-1" />
        <Tri dir="down" />
      </div>
    </div>
    <footer className="flex h-[18px] shrink-0 border-t border-[#1a1a1a]">
      <button aria-label="新建动画预置" className="flex flex-1 items-center justify-end pr-[8px]">
        <Svg w={10} h={10}>
          <rect width="10" height="10" fill="#c9c9c9" />
          <path d="M1 4h5v5M1 4l3 4h2" stroke="#333" fill="none" />
        </Svg>
      </button>
      <div className="w-[17px] border-l border-[#1a1a1a]" />
    </footer>
  </Panel>
);

const RightColumn = () => (
  <aside className="flex w-[206px] shrink-0 flex-col gap-[5px]">
    <Panel tab={<Title>预览控制台</Title>} className="h-[39px] shrink-0">
      <div className="flex items-center justify-between pt-[9px] pr-[4px] pl-[11px]">
        {transport.map((b) => (
          <button key={b.name} aria-label={b.name} className="flex">
            <Svg w={b.w} h={9}>
              <path d={b.d} fill="#b8b8b8" />
              {b.line && <path d={b.line} stroke="#b8b8b8" fill="none" />}
            </Svg>
          </button>
        ))}
      </div>
    </Panel>
    <Panel tab={<Title>信息</Title>} className="h-[26px] shrink-0" />
    <Panel tab={<Title>音频</Title>} className="h-[33px] shrink-0">
      <div className="mt-[8px] ml-[9px] h-[3px] w-[25px] bg-black" />
    </Panel>
    <EffectsPanel />
    {["跟踪", "对齐", "平滑器", "摇摆器", "动态草图", "遮罩插值", "段落"].map((t) => (
      <Panel key={t} tab={<Title>{t}</Title>} className="h-[26px] shrink-0" />
    ))}
  </aside>
);

/* ---------- overlays ---------- */

const Watermark = () => (
  <div className="pointer-events-none absolute right-[56px] bottom-[20px] text-white opacity-75">
    <div className="flex h-[62px] items-end font-[family-name:'Liberation_Sans','Noto_Sans_CJK_SC',sans-serif] font-bold">
      <span className="text-[42px] leading-[40px]">Bai</span>
      <span className="relative flex">
        <Svg w={48} h={62}>
          <g fill="#fff">
            <ellipse cx="6" cy="22" rx="6" ry="8.500" />
            <ellipse cx="19" cy="9" rx="6.500" ry="9" />
            <ellipse cx="34" cy="10" rx="6.500" ry="9" />
            <ellipse cx="41.500" cy="26" rx="6.500" ry="9" />
            <path d="M25 25c7 0 9 9 15 15 7 7 8 19-3 19-5 0-8-1-13-1s-8 1-13 1C1 59-1 48 6 41c7-7 11-16 19-16z" />
          </g>
        </Svg>
        <span className="absolute inset-x-0 bottom-[4px] text-center text-[28px] leading-[28px] text-[#4a4a4a]">du</span>
      </span>
      <span className="ml-[5px] text-[32px] leading-[38px]">经验</span>
    </div>
    <div className="font-[family-name:'Open_Sans'] text-[21px] leading-[28px] font-semibold">jingyan.baidu.com</div>
  </div>
);

const Arrow = () => (
  <svg className="pointer-events-none absolute top-[364px] left-[697px]" width="224" height="276" viewBox="698 365 224 276" aria-hidden="true">
    <path d="M701.500 638L904 380l-5-2 19-8-4 20-2-4-209 252.500z" fill="#1fae1f" />
  </svg>
);

/* ---------- window ---------- */

const menus = ["文件(F)", "编辑(E)", "图像合成(C)", "图层(L)", "效果(T)", "动画(A)", "视图(V)", "窗口(W)", "帮助(H)"];

const TitleBar = () => (
  <div className="flex h-[28px] shrink-0 items-start bg-gradient-to-r from-[#e4f0fc] via-[#b2d5f8] via-30% to-[#c6e0fb] pl-[7px]">
    <span className="mt-[6px] flex h-[15px] w-[16px] items-center justify-center border border-[#c59af2] bg-[#241a52] font-[family-name:'Liberation_Sans'] text-[10px] leading-[12px] font-bold text-[#c9a4f5]">
      Ae
    </span>
    <h1 className="mt-[5px] ml-[5px] flex-1 text-[12px] leading-[18px] text-black">
      Adobe After Effects - 未命名项目.aep *
    </h1>
    <div className="mr-[6px] flex h-[19px] overflow-hidden rounded-b-[4px] border border-t-0 border-[#5b6b80]">
      <button aria-label="最小化" className="flex w-[28px] items-end justify-center border-r border-[#7d8da2] bg-gradient-to-b from-[#e9f1fa] via-[#b3c5da] via-50% to-[#c9d9ea] pb-[4px]">
        <span className="h-[5px] w-[12px] border border-[#4b5666] bg-white" />
      </button>
      <button aria-label="最大化" className="flex w-[26px] items-center justify-center border-r border-[#7d8da2] bg-gradient-to-b from-[#e9f1fa] via-[#b3c5da] via-50% to-[#c9d9ea]">
        <span className="flex h-[10px] w-[12px] items-center justify-center border border-[#4b5666] bg-white">
          <span className="h-[4px] w-[6px] border border-[#4b5666] bg-[#b3c5da]" />
        </span>
      </button>
      <button aria-label="关闭" className="flex w-[47px] items-center justify-center bg-gradient-to-b from-[#e2a294] via-[#c5452c] via-50% to-[#d5694b]">
        <Svg w={13} h={11}>
          <path d="M2 1.500l9 8M11 1.500l-9 8" stroke="#5a2a2a" strokeWidth="4.500" />
          <path d="M2.500 2l8 7M10.500 2l-8 7" stroke="#fff" strokeWidth="2.800" />
        </Svg>
      </button>
    </div>
  </div>
);

export default function App() {
  return (
    <div className="relative flex h-screen min-h-[700px] flex-col overflow-hidden rounded-[6px] border border-[#2a2f38] bg-[#b9d8f8] text-[12px] leading-[16px] text-[#d2d2d2] shadow-[inset_1px_1px_#fff] [font-family:'Noto_Sans','Noto_Sans_CJK_SC',sans-serif]">
      <TitleBar />
      <div className="mx-[6px] mb-[6px] flex min-h-0 flex-1 flex-col border border-[#4c545e] bg-[#141414] outline outline-[#e9f3fd]">
        <nav className="flex h-[20px] shrink-0 items-center border-b border-[#fafcff] bg-gradient-to-b from-white via-[#eceff8] via-45% to-[#d6dcee] pl-[7px] text-black">
          {menus.map((m) => (
            <button
              key={m}
              className="mr-[15px] font-[family-name:'Open_Sans','Noto_Sans_CJK_SC',sans-serif] text-[12px] leading-[18px] whitespace-nowrap"
            >
              {m}
            </button>
          ))}
        </nav>
        <Toolbar />
        <main className="flex min-h-0 flex-1 gap-[4px] px-px pt-[3px] pb-px">
          <div className="flex min-w-0 flex-1 flex-col gap-[5px]">
            <div className="flex h-[403px] shrink-0 gap-[4px]">
              <ProjectPanel />
              <CompPanel />
            </div>
            <Timeline />
          </div>
          <RightColumn />
        </main>
      </div>
      <Arrow />
      <Watermark />
    </div>
  );
}
